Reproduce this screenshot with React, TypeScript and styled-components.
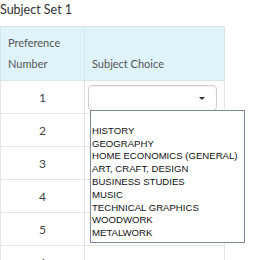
import styled, { createGlobalStyle } from "styled-components";

const subjects = [
  "",
  "HISTORY",
  "GEOGRAPHY",
  "HOME ECONOMICS (GENERAL)",
  "ART, CRAFT, DESIGN",
  "BUSINESS STUDIES",
  "MUSIC",
  "TECHNICAL GRAPHICS",
  "WOODWORK",
  "METALWORK",
];

const rows = [1, 2, 3, 4, 5, 6];

const App = () => {
  return (
    <Page>
      <GlobalStyle />
      <Title>Subject Set 1</Title>
      <Table>
        <colgroup>
          <col style={{ width: 84 }} />
          <col />
        </colgroup>
        <thead>
          <tr>
            <HeadCell>
              Preference
              <br />
              Number
            </HeadCell>
            <HeadCell>Subject Choice</HeadCell>
          </tr>
        </thead>
        <tbody>
          {rows.map((n) => (
            <tr key={n}>
              <NumCell>{n}</NumCell>
              <ChoiceCell>
                {n === 1 && (
                  <>
                    <SelectBox>
                      <Caret />
                    </SelectBox>
                    <OptionList>
                      {subjects.map((s, i) => (
                        <OptionItem key={i}>{s || "\u00a0"}</OptionItem>
                      ))}
                    </OptionList>
                  </>
                )}
              </ChoiceCell>
            </tr>
          ))}
        </tbody>
      </Table>
    </Page>
  );
};

const GlobalStyle = createGlobalStyle`
  body {
    margin: 0;
    background: #ffffff;
    font-family: Lato, "Open Sans", sans-serif;
  }
`;

const Page = styled.div`
  width: 260px;
  height: 260px;
  overflow: hidden;
`;

const Title = styled.div`
  height: 26px;
  line-height: 20px;
  font-size: 12.5px;
  color: #333333;
`;

const Table = styled.table`
  border-collapse: collapse;
  width: 225px;
  table-layout: fixed;
  tr {
    height: 33px;
  }
  thead tr {
    height: 54px;
  }
`;

const HeadCell = styled.th`
  background: #dff3fb;
  border: 1px solid #d8e6ec;
  padding: 0 4px 6px 7px;
  text-align: left;
  vertical-align: bottom;
  font-weight: 400;
  font-size: 11px;
  line-height: 21px;
  color: #555555;
  white-space: nowrap;
`;

const NumCell = styled.td`
  border: 1px solid #e6e6e6;
  text-align: center;
  font-size: 12px;
  color: #444444;
  padding: 0;
`;

const ChoiceCell = styled.td`
  position: relative;
  border: 1px solid #e6e6e6;
  padding: 0 6px 0 3px;
`;

const SelectBox = styled.div`
  position: relative;
  width: 129px;
  height: 26px;
  box-sizing: border-box;
  border: 1px solid #cfcfcf;
  border-radius: 4px;
  background: #ffffff;
  box-shadow: inset 0 1px 2px rgba(0, 0, 0, 0.06);
  margin-top: 1px;
`;

const Caret = styled.span`
  position: absolute;
  right: 11px;
  top: 11px;
  width: 0;
  height: 0;
  border-left: 3px solid transparent;
  border-right: 3px solid transparent;
  border-top: 3px solid #333333;
`;

const OptionList = styled.div`
  position: absolute;
  left: 5px;
  top: 29px;
  width: 155px;
  box-sizing: border-box;
  border: 1px solid #7d8a99;
  background: #ffffff;
  padding: 1px 0 2px;
  z-index: 2;
`;

const OptionItem = styled.div`
  height: 12.8px;
  line-height: 12.8px;
  padding-left: 1px;
  font-family: "Liberation Sans", Arial, sans-serif;
  font-size: 9.6px;
  color: #111111;
  white-space: nowrap;
`;

export default App;
